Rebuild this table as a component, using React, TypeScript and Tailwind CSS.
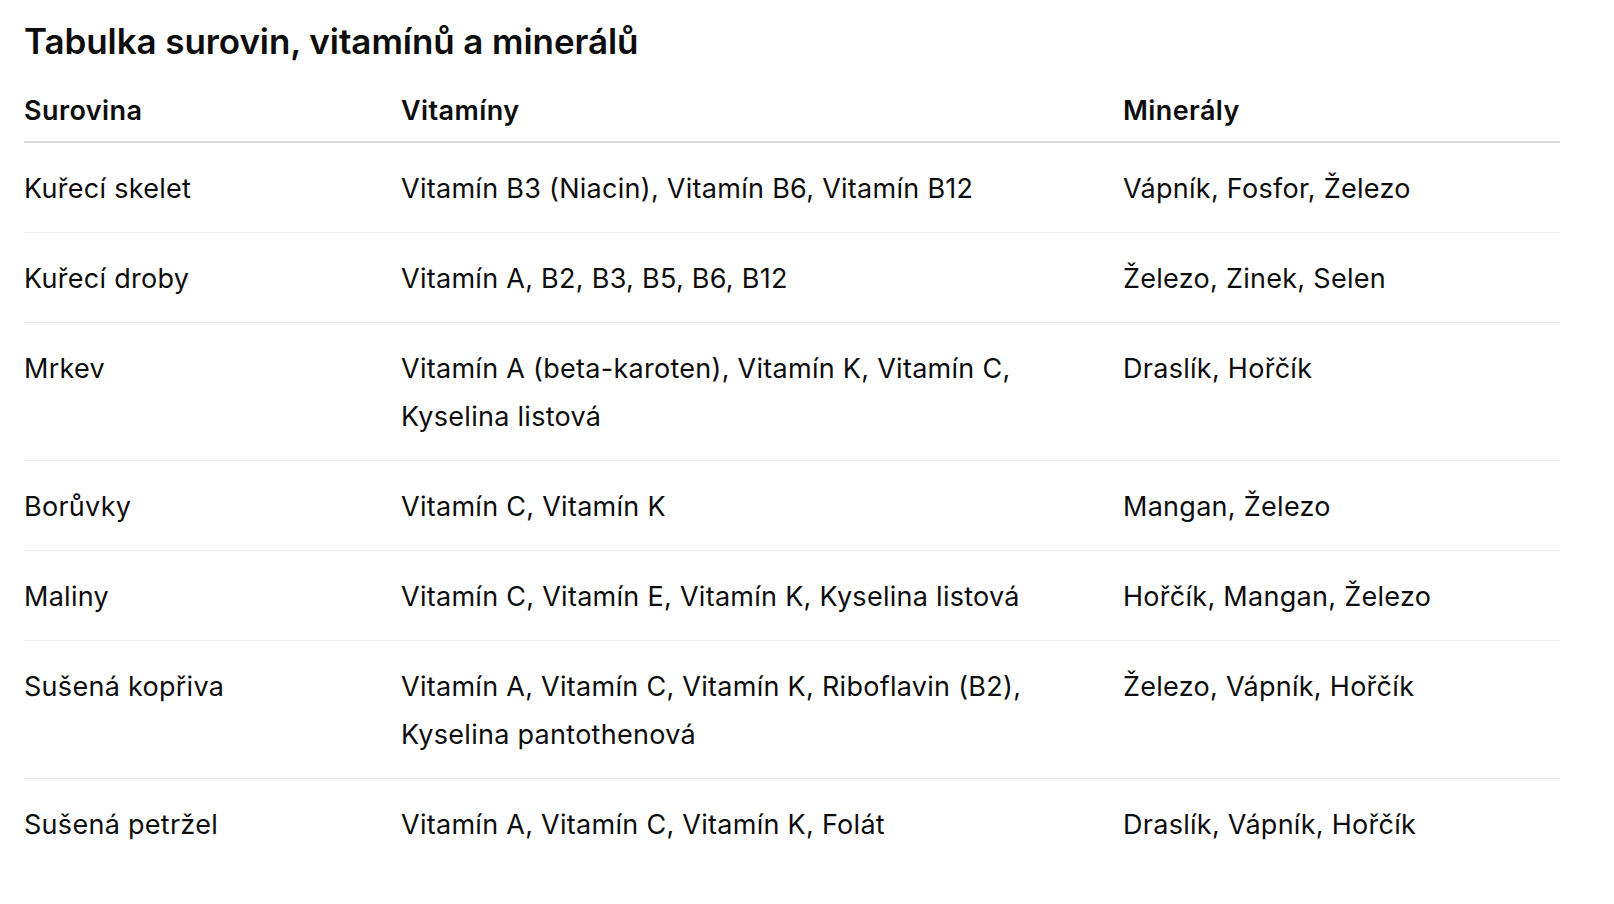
import React from 'react';

// --- Données du tableau --- //
interface Row {
  surovina: string;
  vitaminy: string;
  mineraly: string;
}

const rows: Row[] = [
  { surovina: 'Kuřecí skelet', vitaminy: 'Vitamín B3 (Niacin), Vitamín B6, Vitamín B12', mineraly: 'Vápník, Fosfor, Železo' },
  { surovina: 'Kuřecí droby', vitaminy: 'Vitamín A, B2, B3, B5, B6, B12', mineraly: 'Železo, Zinek, Selen' },
  { surovina: 'Mrkev', vitaminy: 'Vitamín A (beta-karoten), Vitamín K, Vitamín C, Kyselina listová', mineraly: 'Draslík, Hořčík' },
  { surovina: 'Borůvky', vitaminy: 'Vitamín C, Vitamín K', mineraly: 'Mangan, Železo' },
  { surovina: 'Maliny', vitaminy: 'Vitamín C, Vitamín E, Vitamín K, Kyselina listová', mineraly: 'Hořčík, Mangan, Železo' },
  { surovina: 'Sušená kopřiva', vitaminy: 'Vitamín A, Vitamín C, Vitamín K, Riboflavin (B2), Kyselina pantothenová', mineraly: 'Železo, Vápník, Hořčík' },
  { surovina: 'Sušená petržel', vitaminy: 'Vitamín A, Vitamín C, Vitamín K, Folát', mineraly: 'Draslík, Vápník, Hořčík' },
];

const App = () => {
  return (
    <div className="min-h-screen bg-white px-[24px] pt-[19px] text-[#0d0d0d] font-['Inter','Liberation_Sans',sans-serif]">
      <h2 className="text-[35px] leading-[44px] font-semibold tracking-[-0.08px] mb-[24px]">
        Tabulka surovin, vitamínů a minerálů
      </h2>
      <table className="w-[1536px] table-fixed border-collapse text-[27px] leading-[48px] tracking-[0.28px]">
        <colgroup>
          <col className="w-[377px]" />
          <col className="w-[722px]" />
          <col className="w-[437px]" />
        </colgroup>
        <thead>
          <tr className="border-b-2 border-[#d9d9d9]">
            <th className="text-left font-semibold pb-[6px] pr-4 tracking-[0.4px]">Surovina</th>
            <th className="text-left font-semibold pb-[6px] pr-4 tracking-[0.4px]">Vitamíny</th>
            <th className="text-left font-semibold pb-[6px] tracking-[0.4px]">Minerály</th>
          </tr>
        </thead>
        <tbody>
          {rows.map((row, i) => (
            <tr key={row.surovina} className={i < rows.length - 1 ? 'border-b border-[#ececec]' : ''}>
              <td className="align-top pt-[21.5px] pb-[19.5px] pr-4">{row.surovina}</td>
              <td className="align-top pt-[21.5px] pb-[19.5px] pr-[60px]">{row.vitaminy}</td>
              <td className="align-top pt-[21.5px] pb-[19.5px]">{row.mineraly}</td>
            </tr>
          ))}
        </tbody>
      </table>
    </div>
  );
};

export default App;
